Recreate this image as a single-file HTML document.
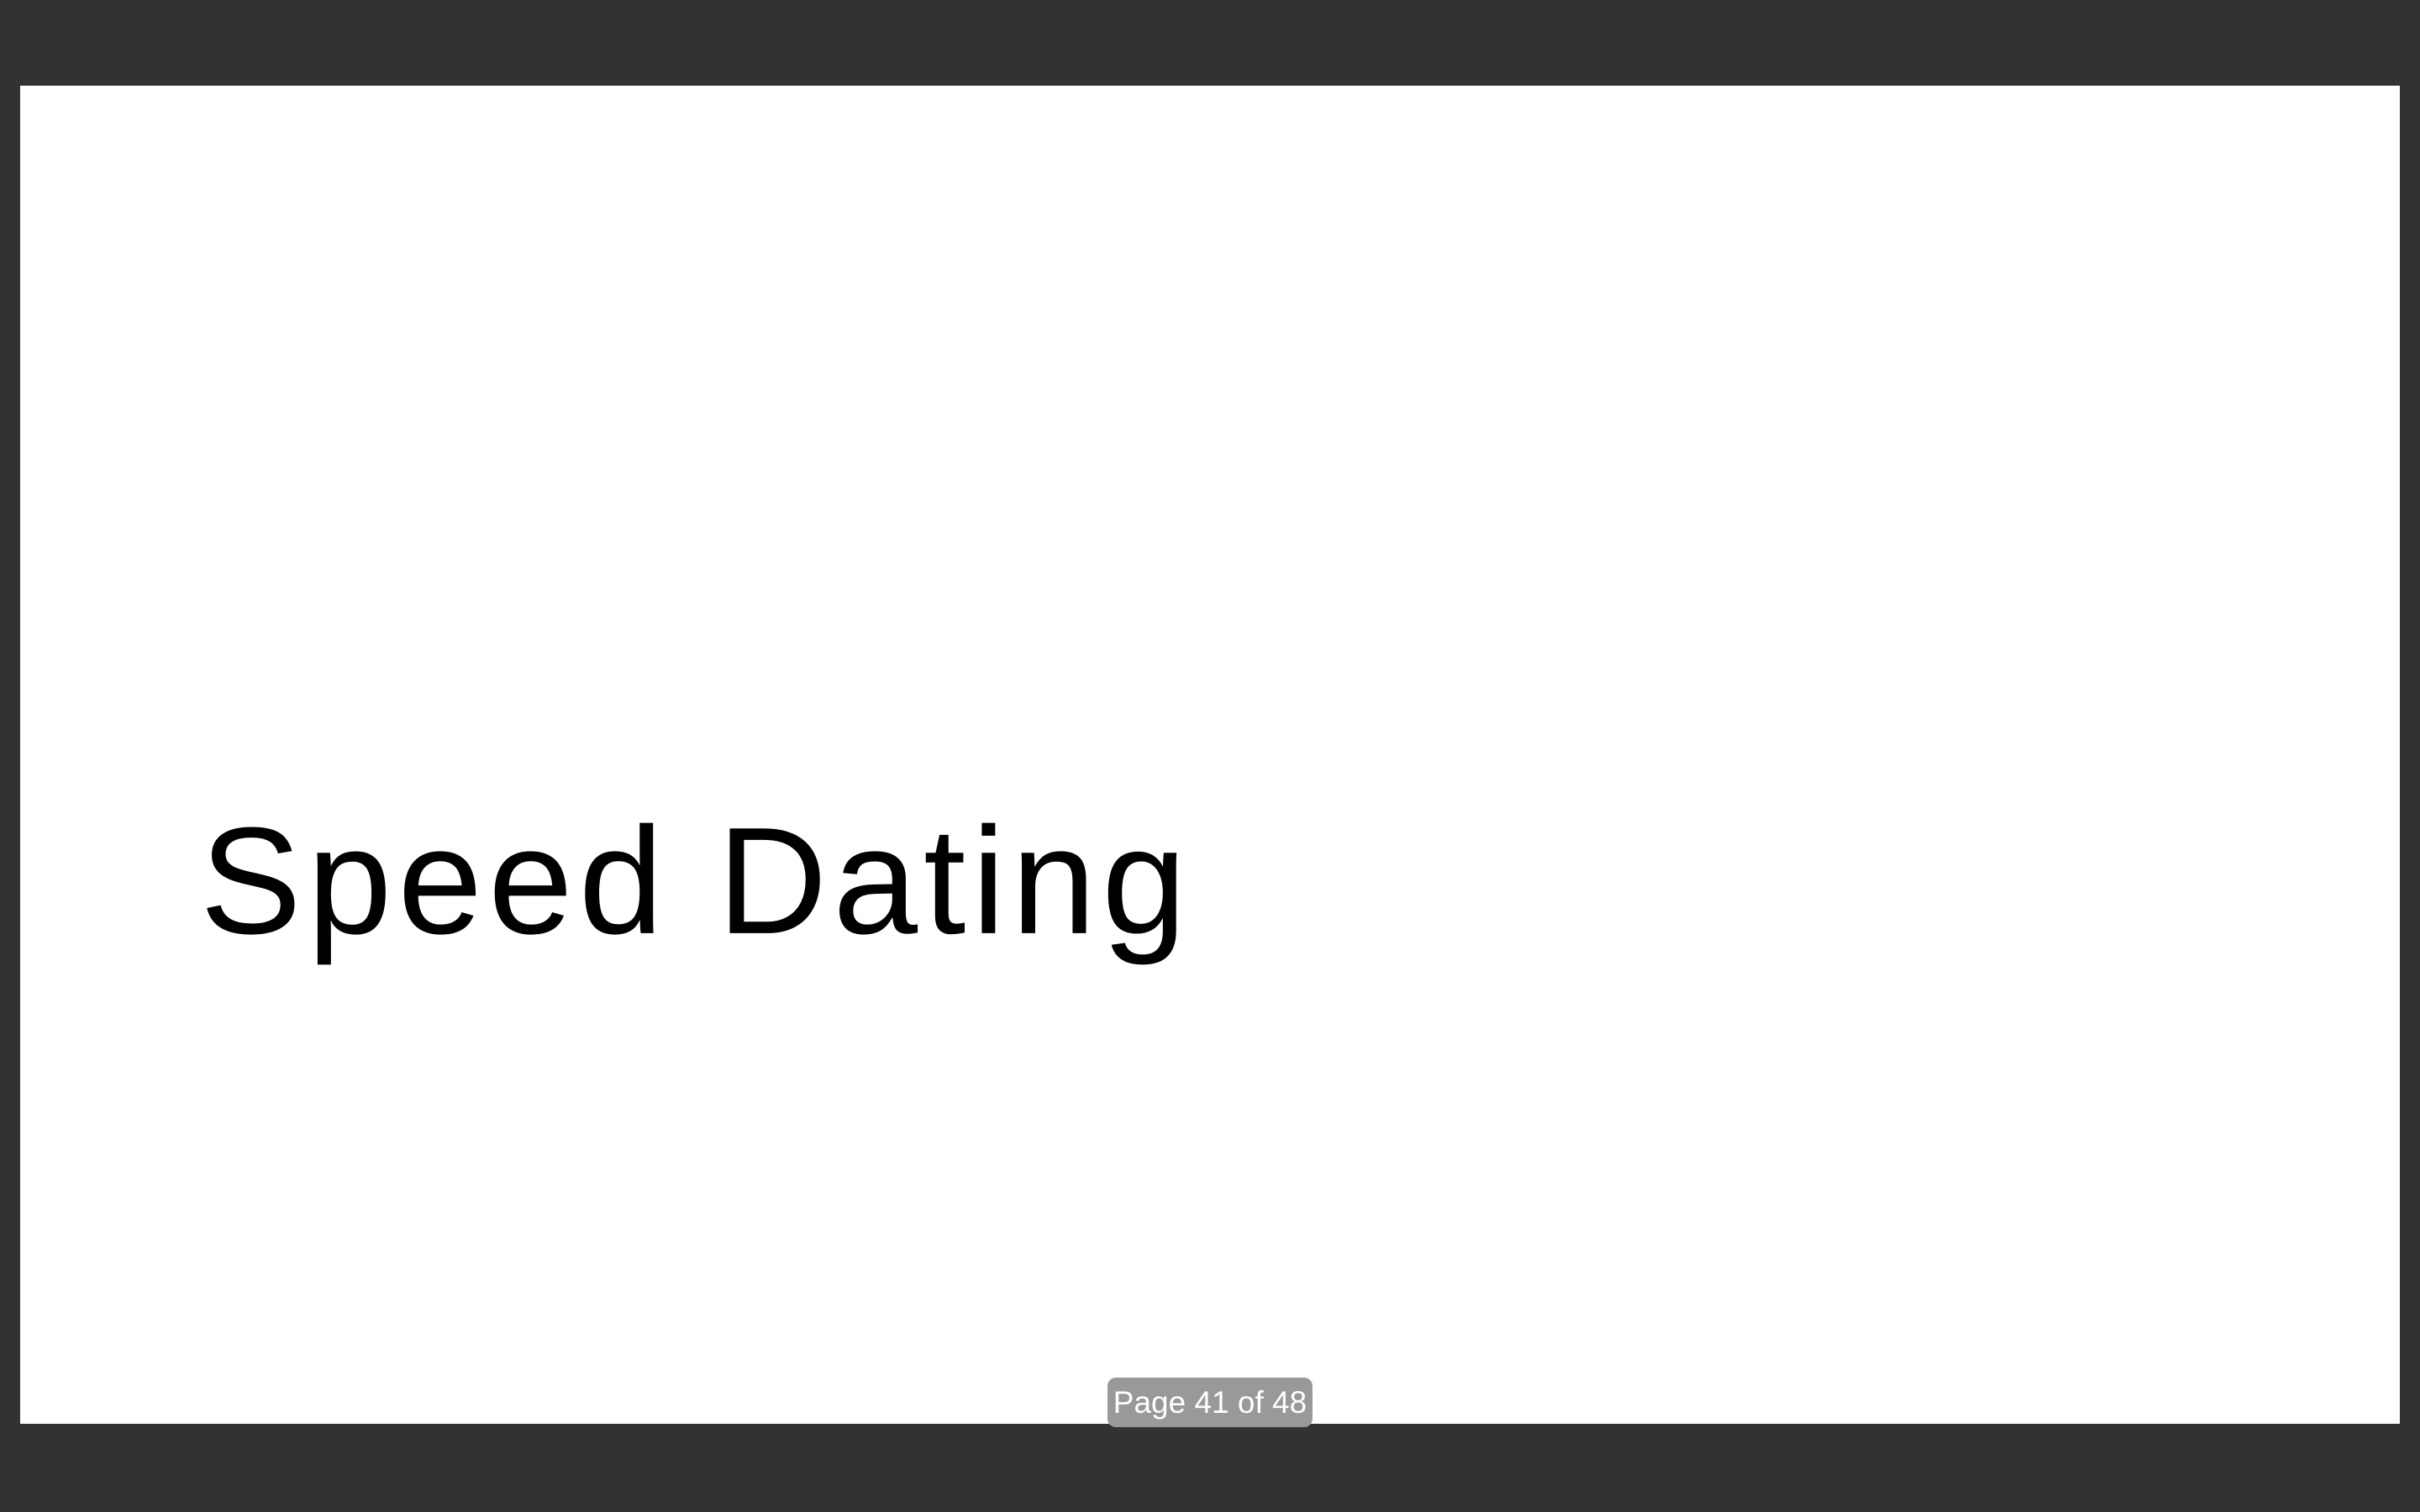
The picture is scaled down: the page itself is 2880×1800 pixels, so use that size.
<!DOCTYPE html>
<html><head><style>
html,body{margin:0;padding:0;}
body{width:2880px;height:1800px;background:#323232;position:relative;overflow:hidden;font-family:"Liberation Sans",sans-serif;}
.page{position:absolute;left:24px;top:102px;width:2832px;height:1593px;background:#fff;}
.title{position:absolute;left:238px;top:1120px;transform:translateY(-100%);font-size:181px;line-height:1;letter-spacing:7px;color:#000;white-space:nowrap;}
.title span{display:block;line-height:0.78;}
.badge{position:absolute;left:1318px;top:1640px;width:244px;height:59px;background:#999;border-radius:10px;color:#fff;font-size:37px;line-height:59px;text-align:center;}
</style></head><body>
<div class="page"></div>
<div class="title"><span>Speed Dating</span></div>
<div class="badge">Page 41 of 48</div>
</body></html>
